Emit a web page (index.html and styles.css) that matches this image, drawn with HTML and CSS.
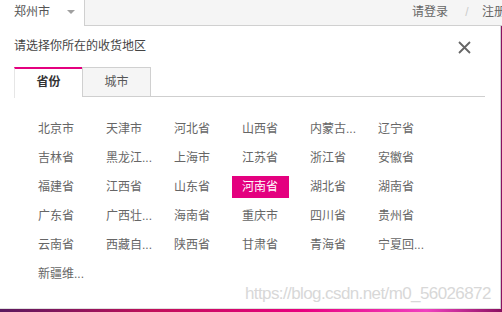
FILE: index.html
```html
<!DOCTYPE html>
<html>
<head>
	<meta charset="utf-8">
	<title>收货地区</title>
	<link rel="stylesheet" href="styles.css">
</head>
<body>
	<div class="topbar">
		<div class="city-trigger">郑州市<span class="arrow"></span></div>
		<div class="top-links">
			<a href="#">请登录</a>
			<span class="sep">/</span>
			<a href="#">注册</a>
		</div>
	</div>
	<div class="area-panel">
		<div class="panel-head">
			<span class="panel-title">请选择你所在的收货地区</span>
			<a class="close" href="#">
				<svg width="13" height="13" viewBox="0 0 13 13"><path d="M1 1L12 12M12 1L1 12" stroke="#666" stroke-width="1.8"/></svg>
			</a>
		</div>
		<div class="tabs">
			<div class="tab active">省份</div>
			<div class="tab">城市</div>
		</div>
		<div class="area-list">
			<a class="area">北京市</a>
			<a class="area">天津市</a>
			<a class="area">河北省</a>
			<a class="area">山西省</a>
			<a class="area">内蒙古...</a>
			<a class="area">辽宁省</a>
			<a class="area">吉林省</a>
			<a class="area">黑龙江...</a>
			<a class="area">上海市</a>
			<a class="area">江苏省</a>
			<a class="area">浙江省</a>
			<a class="area">安徽省</a>
			<a class="area">福建省</a>
			<a class="area">江西省</a>
			<a class="area">山东省</a>
			<a class="area selected">河南省</a>
			<a class="area">湖北省</a>
			<a class="area">湖南省</a>
			<a class="area">广东省</a>
			<a class="area">广西壮...</a>
			<a class="area">海南省</a>
			<a class="area">重庆市</a>
			<a class="area">四川省</a>
			<a class="area">贵州省</a>
			<a class="area">云南省</a>
			<a class="area">西藏自...</a>
			<a class="area">陕西省</a>
			<a class="area">甘肃省</a>
			<a class="area">青海省</a>
			<a class="area">宁夏回...</a>
			<a class="area">新疆维...</a>
		</div>
		<div class="watermark">https://blog.csdn.net/m0_56026872</div>
	</div>
</body>
</html>
```

FILE: styles.css
```css
		body {
			margin: 0;
			width: 502px;
			height: 312px;
			overflow: hidden;
			background: linear-gradient(90deg, #5a1a5e 0%, #c0105a 30%, #e8007e 60%, #f040c0 85%, #8a1060 100%);
			font-family: "Liberation Sans", "Noto Sans CJK SC", sans-serif;
			font-size: 12px;
			color: #333;
		}

		a {
			color: inherit;
			text-decoration: none;
		}

		.topbar {
			display: flex;
			height: 25px;
			background-color: #f5f5f5;
			border-bottom: 1px solid #d0d0d0;
			line-height: 25px;
		}

		.city-trigger {
			width: 70px;
			padding-left: 14px;
			height: 26px;
			background-color: #ffffff;
			border-right: 1px solid #d0d0d0;
			color: #555;
		}

		.arrow {
			display: inline-block;
			margin-left: 17px;
			vertical-align: 2px;
			border-left: 4px solid transparent;
			border-right: 4px solid transparent;
			border-top: 4px solid #a0a0a0;
		}

		.top-links {
			margin-left: auto;
			margin-right: -4px;
			color: #666;
		}

		.sep {
			color: #ccc;
			margin: 0 10px 0 14px;
		}

		.area-panel {
			position: relative;
			width: 485px;
			height: 282px;
			padding: 0 15px 0 0;
			background-color: #ffffff;
			border-right: 1px solid #cfcfcf;
			border-bottom: 1px solid #e0e0e0;
		}

		.panel-head {
			display: flex;
			justify-content: space-between;
			align-items: center;
			padding: 12px 0 0 14px;
			height: 16px;
			line-height: 16px;
			color: #444;
		}

		.close {
			margin-top: 2px;
			margin-right: 14px;
			height: 13px;
		}

		.tabs {
			display: flex;
			margin: 13px 0 0 14px;
			border-bottom: 1px solid #cfcfcf;
			height: 29px;
		}

		.tab {
			width: 67px;
			height: 28px;
			line-height: 28px;
			text-align: center;
			background-color: #f5f5f5;
			border: 1px solid #d0d0d0;
			border-bottom: none;
			color: #555;
		}

		.tab.active {
			height: 28px;
			line-height: 26px;
			padding-bottom: 1px;
			background-color: #ffffff;
			border-top: 2px solid #e4007f;
			border-left-color: #e6e6e6;
			border-right: none;
			font-weight: bold;
			color: #333;
		}

		.area-list {
			display: grid;
			grid-template-columns: repeat(6, 57px);
			column-gap: 11px;
			row-gap: 7px;
			padding: 21px 0 0 28px;
		}

		.area {
			height: 22px;
			line-height: 22px;
			padding-left: 10px;
			white-space: nowrap;
			overflow: hidden;
			color: #666;
		}

		.area.selected {
			background-color: #e4007f;
			color: #ffffff;
		}

		.watermark {
			position: absolute;
			left: 245px;
			top: 258px;
			font-size: 17px;
			letter-spacing: -0.6px;
			color: #d8d8d8;
			white-space: nowrap;
		}
```
